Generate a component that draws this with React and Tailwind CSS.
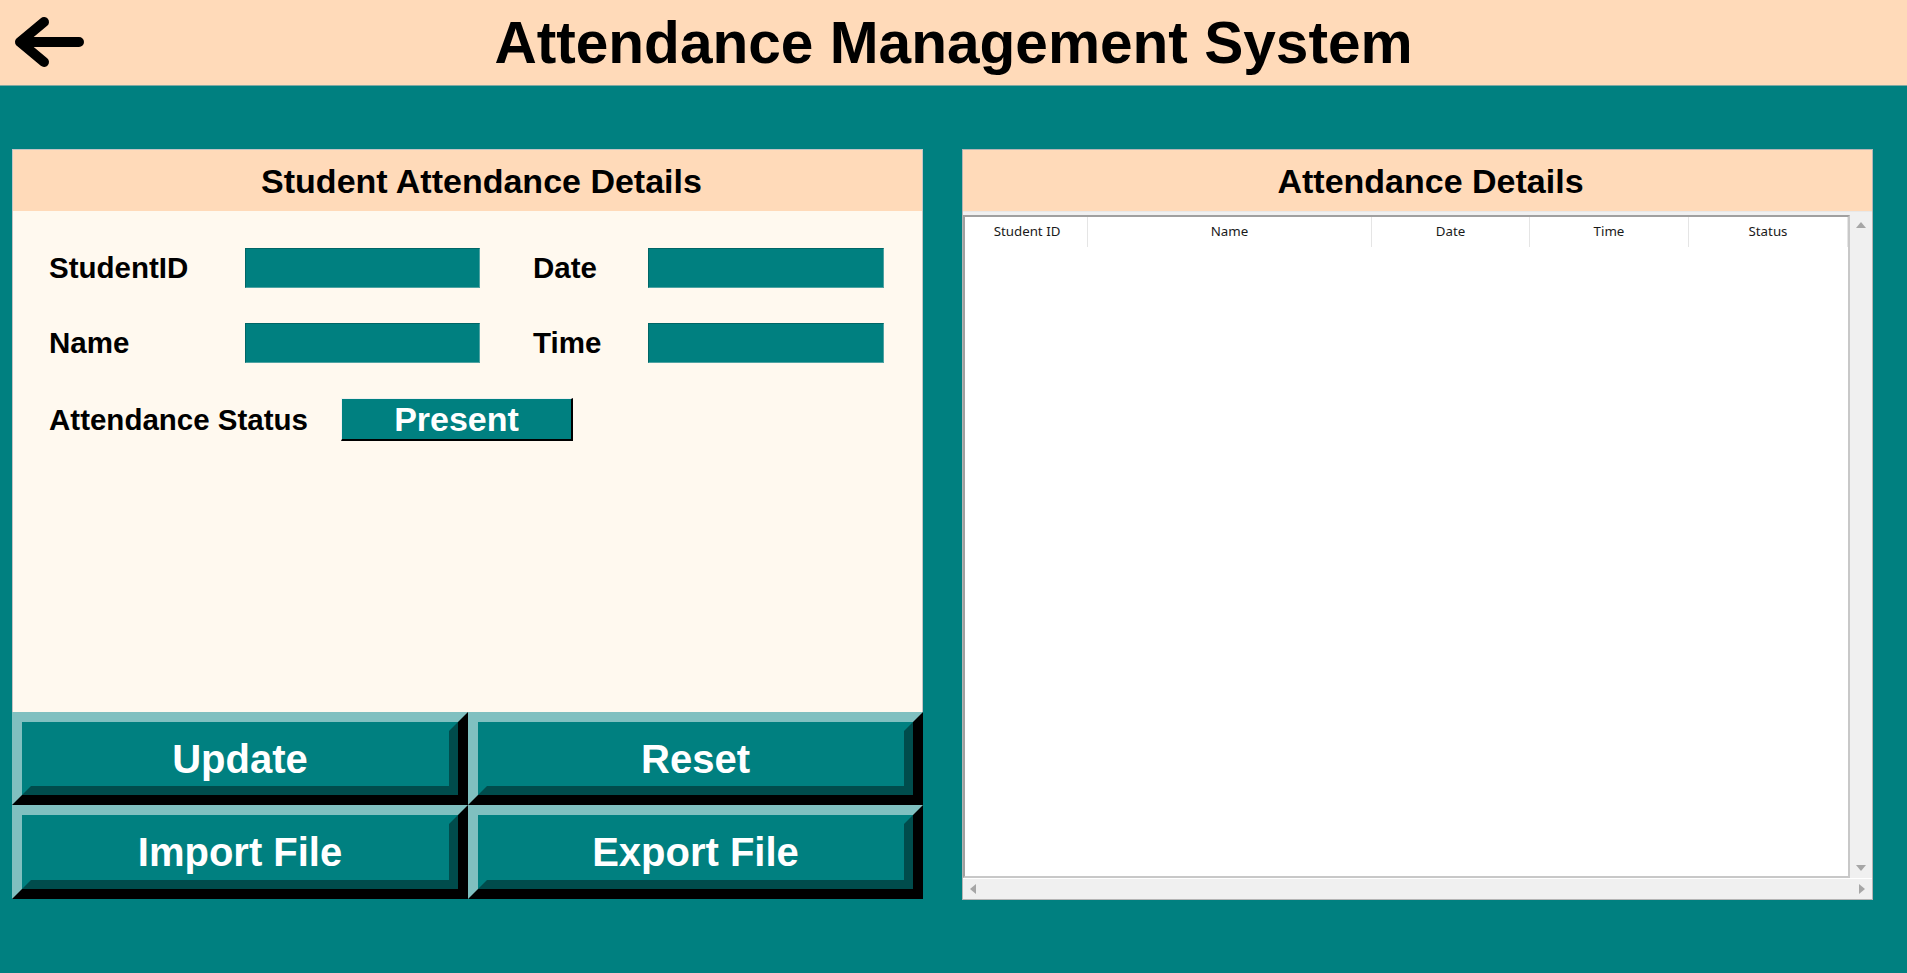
import React from "react";

function BevelButton({ label }) {
  return (
    <div className="flex h-full w-full border-[10px] border-t-[#80c0c0] border-l-[#80c0c0] border-r-black border-b-black">
      <div className="flex flex-1 items-center justify-center border-[9px] border-t-[#008080] border-l-[#008080] border-r-[#004c4c] border-b-[#004c4c] bg-[#008080]">
        <span className="text-[40px] font-bold leading-none text-white">{label}</span>
      </div>
    </div>
  );
}

function Field({ w }) {
  return (
    <div
      className={`h-[40px] ${w} border border-t-[#006666] border-l-[#006666] border-r-[#4fa3a3] border-b-[#4fa3a3] bg-[#008080]`}
    />
  );
}

function Tri({ dir }) {
  const pts = {
    up: "0,8 5,2 10,8",
    down: "0,2 5,8 10,2",
    left: "8,0 2,5 8,10",
    right: "2,0 8,5 2,10",
  }[dir];
  return (
    <svg width="10" height="10" viewBox="0 0 10 10">
      <polygon points={pts} fill="#a6a6a6" />
    </svg>
  );
}

export default function App() {
  const cols = [
    { name: "Student ID", w: "w-[121px]" },
    { name: "Name", w: "w-[284px]" },
    { name: "Date", w: "w-[158px]" },
    { name: "Time", w: "w-[159px]" },
    { name: "Status", w: "w-[159px]" },
  ];
  return (
    <div
      className="flex min-h-[973px] w-full flex-col bg-[#008080]"
      style={{ fontFamily: '"Liberation Sans", Arial, sans-serif' }}
    >
      {/* Top header */}
      <header className="grid h-[86px] grid-cols-[1fr_auto_1fr] items-center border-b border-[#7fa9a2] bg-[#ffdab9]">
        <div className="flex items-center">
          <svg width="100" height="86" viewBox="0 0 100 86" className="block">
            <path
              d="M20 42 H79 M44 22 L20 42 L44 62"
              fill="none"
              stroke="#000"
              strokeWidth="10"
              strokeLinecap="round"
              strokeLinejoin="round"
            />
          </svg>
        </div>
        <h1 className="text-[58.6px] font-bold leading-none text-black">
          Attendance Management System
        </h1>
        <div />
      </header>

      {/* Panels */}
      <main className="flex gap-[39px] pl-[12px] pt-[63px]">
        {/* Left panel */}
        <section className="flex w-[911px] flex-col">
          <div className="flex h-[62px] items-center justify-center border border-b-0 border-[#c4c4c4] bg-[#ffdab9] pl-[28px]">
            <h2 className="text-[34px] font-bold leading-none text-black">
              Student Attendance Details
            </h2>
          </div>
          <div className="flex h-[501px] flex-col gap-[35px] border-l border-r border-[#c4c4c4] bg-[#fff9ef] pl-[36px] pt-[37px]">
            <div className="flex h-[40px] items-center">
              <span className="w-[196px] text-[29.5px] font-bold leading-none text-black">StudentID</span>
              <Field w="w-[235px]" />
              <span className="ml-[53px] w-[115px] text-[29.5px] font-bold leading-none text-black">Date</span>
              <Field w="w-[236px]" />
            </div>
            <div className="flex h-[40px] items-center">
              <span className="w-[196px] text-[29.5px] font-bold leading-none text-black">Name</span>
              <Field w="w-[235px]" />
              <span className="ml-[53px] w-[115px] text-[29.5px] font-bold leading-none text-black">Time</span>
              <Field w="w-[236px]" />
            </div>
            <div className="flex h-[43px] items-center">
              <span className="w-[292px] text-[29.5px] font-bold leading-none text-black">Attendance Status</span>
              <div className="flex h-[43px] w-[232px] items-center justify-center border-t border-l border-t-[#f0f0f0] border-l-[#f0f0f0] border-r-2 border-b-2 border-r-black border-b-black bg-[#008080]">
                <span className="text-[34px] font-bold leading-none text-white">Present</span>
              </div>
            </div>
          </div>
          <div className="grid grid-cols-[456px_455px] grid-rows-[93px_94px]">
            <BevelButton label="Update" />
            <BevelButton label="Reset" />
            <BevelButton label="Import File" />
            <BevelButton label="Export File" />
          </div>
        </section>

        {/* Right panel */}
        <section className="flex w-[911px] flex-col border border-[#b4b4b4]">
          <div className="flex h-[62px] items-center justify-center border-b border-[#e8e8e8] bg-[#ffdab9] pl-[26px]">
            <h2 className="text-[34px] font-bold leading-none text-black">Attendance Details</h2>
          </div>
          <div className="flex flex-col bg-[#f0f0f0] pt-[3px]">
            <div className="flex h-[663px]">
              <div className="flex-1 border-2 border-t-[#a0a0a0] border-l-[#a0a0a0] border-r-[#c8c8c8] border-b-[#c8c8c8] bg-white pl-[2px]">
                <div
                  className="flex h-[30px]"
                  style={{ fontFamily: '"Noto Sans", "Open Sans", sans-serif' }}
                >
                  {cols.map((c) => (
                    <div
                      key={c.name}
                      className={`${c.w} flex items-center justify-center border-r border-[#e5e5e5] text-[13.3px] text-[#1a1a1a]`}
                    >
                      {c.name}
                    </div>
                  ))}
                </div>
              </div>
              <div className="flex w-[22px] flex-col items-center justify-between py-[5px]">
                <Tri dir="up" />
                <Tri dir="down" />
              </div>
            </div>
            <div className="flex h-[21px] items-center justify-between border-t border-white px-[5px]">
              <Tri dir="left" />
              <Tri dir="right" />
            </div>
          </div>
        </section>
      </main>
    </div>
  );
}
